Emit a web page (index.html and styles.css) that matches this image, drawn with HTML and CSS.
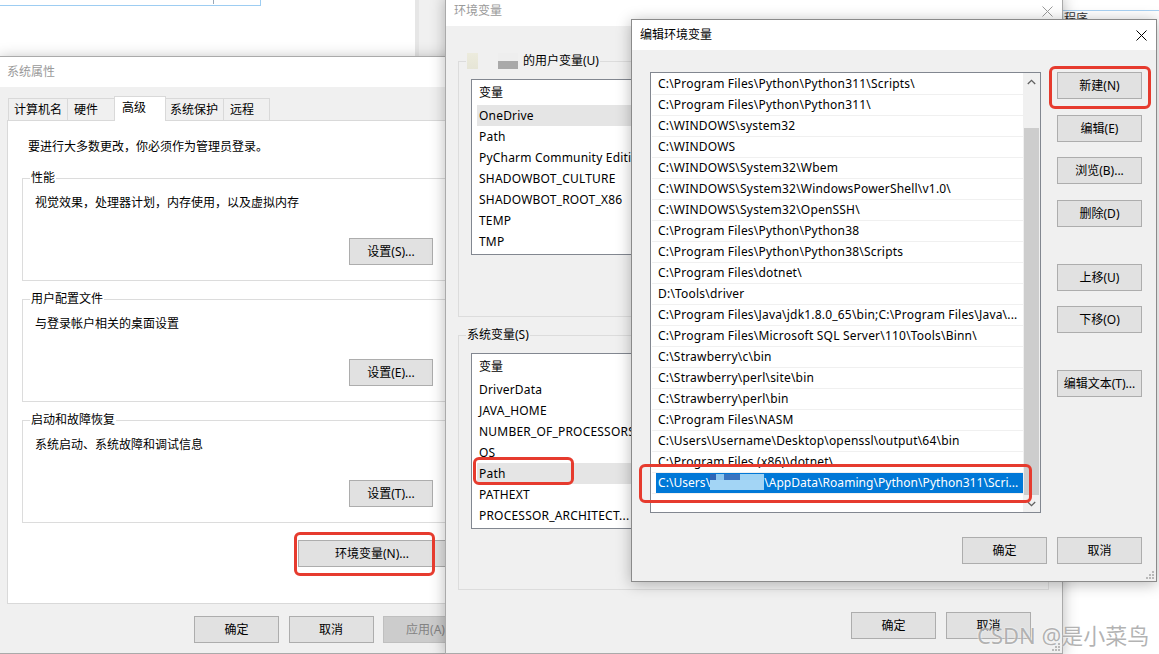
FILE: index.html
```html
<!DOCTYPE html>
<html lang="zh-CN">
<head>
<meta charset="utf-8">
<title>编辑环境变量</title>
<link rel="stylesheet" href="styles.css">
</head>
<body>
<div class="desktop">

  <div class="bgwin bg-left">
    <div class="bg-input"><span class="bg-tick"></span></div>
    <div class="bg-fill"></div>
    <div class="bg-strip"></div>
  </div>
  <div class="bgwin bg-right">
    <div class="bg-line"></div>
    <div class="bg-text">应用程序</div>
  </div>

  <section class="win win-sys">
    <header class="titlebar"><span class="title inactive">系统属性</span></header>
    <div class="sys-body">
      <div class="tabs">
        <span class="tab t1">计算机名</span>
        <span class="tab t2">硬件</span>
        <span class="tab t3 sel">高级</span>
        <span class="tab t4">系统保护</span>
        <span class="tab t5">远程</span>
      </div>
      <div class="panel">
        <p class="notice">要进行大多数更改，你必须作为管理员登录。</p>
        <fieldset class="group first">
          <legend>性能</legend>
          <p class="desc">视觉效果，处理器计划，内存使用，以及虚拟内存</p>
          <div class="btnrow"><button class="btn btn-set">设置(S)...</button></div>
        </fieldset>
        <fieldset class="group">
          <legend>用户配置文件</legend>
          <p class="desc">与登录帐户相关的桌面设置</p>
          <div class="btnrow"><button class="btn btn-set">设置(E)...</button></div>
        </fieldset>
        <fieldset class="group">
          <legend>启动和故障恢复</legend>
          <p class="desc">系统启动、系统故障和调试信息</p>
          <div class="btnrow"><button class="btn btn-set">设置(T)...</button></div>
        </fieldset>
        <div class="envrow"><button class="btn btn-env">环境变量(N)...</button></div>
      </div>
      <div class="sys-footer">
        <button class="btn">确定</button>
        <button class="btn">取消</button>
        <button class="btn disabled">应用(A)</button>
      </div>
    </div>
  </section>

  <section class="win win-env">
    <header class="titlebar">
      <span class="title inactive">环境变量</span>
      <span class="close"><svg width="11" height="11" viewBox="0 0 11 11"><path d="M0.5 0.5L10.5 10.5M10.5 0.5L0.5 10.5" stroke="#9a9a9a" stroke-width="1" fill="none"/></svg></span>
    </header>
    <div class="env-body">
      <fieldset class="env-group">
        <legend><span class="blur"></span>的用户变量(U)</legend>
        <div class="lv">
          <div class="lv-head">变量</div>
          <div class="lv-row sel">OneDrive</div>
          <div class="lv-row">Path</div>
          <div class="lv-row">PyCharm Community Editi...</div>
          <div class="lv-row">SHADOWBOT_CULTURE</div>
          <div class="lv-row">SHADOWBOT_ROOT_X86</div>
          <div class="lv-row">TEMP</div>
          <div class="lv-row">TMP</div>
        </div>
      </fieldset>
      <fieldset class="env-group second">
        <legend>系统变量(S)</legend>
        <div class="lv">
          <div class="lv-head">变量</div>
          <div class="lv-row">DriverData</div>
          <div class="lv-row">JAVA_HOME</div>
          <div class="lv-row">NUMBER_OF_PROCESSORS</div>
          <div class="lv-row">OS</div>
          <div class="lv-row sel">Path</div>
          <div class="lv-row">PATHEXT</div>
          <div class="lv-row">PROCESSOR_ARCHITECT...</div>
        </div>
      </fieldset>
      <div class="env-footer">
        <button class="btn">确定</button>
        <button class="btn">取消</button>
      </div>
    </div>
    <span class="grip"><svg width="10" height="10" viewBox="0 0 10 10"><g fill="#b9b9b9"><rect x="7" y="1" width="2" height="2"/><rect x="4" y="4" width="2" height="2"/><rect x="7" y="4" width="2" height="2"/><rect x="1" y="7" width="2" height="2"/><rect x="4" y="7" width="2" height="2"/><rect x="7" y="7" width="2" height="2"/></g></svg></span>
  </section>

  <section class="win win-edit">
    <header class="titlebar">
      <span class="title">编辑环境变量</span>
      <span class="close"><svg width="11" height="11" viewBox="0 0 11 11"><path d="M0.5 0.5L10.5 10.5M10.5 0.5L0.5 10.5" stroke="#000" stroke-width="1" fill="none"/></svg></span>
    </header>
    <div class="edit-body">
      <div class="elist">
        <div class="el-rows">
          <div class="el-row"><span>C:\Program Files\Python\Python311\Scripts\</span></div>
          <div class="el-row"><span>C:\Program Files\Python\Python311\</span></div>
          <div class="el-row"><span>C:\WINDOWS\system32</span></div>
          <div class="el-row"><span>C:\WINDOWS</span></div>
          <div class="el-row"><span>C:\WINDOWS\System32\Wbem</span></div>
          <div class="el-row"><span>C:\WINDOWS\System32\WindowsPowerShell\v1.0\</span></div>
          <div class="el-row"><span>C:\WINDOWS\System32\OpenSSH\</span></div>
          <div class="el-row"><span>C:\Program Files\Python\Python38</span></div>
          <div class="el-row"><span>C:\Program Files\Python\Python38\Scripts</span></div>
          <div class="el-row"><span>C:\Program Files\dotnet\</span></div>
          <div class="el-row"><span>D:\Tools\driver</span></div>
          <div class="el-row"><span>C:\Program Files\Java\jdk1.8.0_65\bin;C:\Program Files\Java\...</span></div>
          <div class="el-row"><span>C:\Program Files\Microsoft SQL Server\110\Tools\Binn\</span></div>
          <div class="el-row"><span>C:\Strawberry\c\bin</span></div>
          <div class="el-row"><span>C:\Strawberry\perl\site\bin</span></div>
          <div class="el-row"><span>C:\Strawberry\perl\bin</span></div>
          <div class="el-row"><span>C:\Program Files\NASM</span></div>
          <div class="el-row"><span>C:\Users\Username\Desktop\openssl\output\64\bin</span></div>
          <div class="el-row"><span>C:\Program Files (x86)\dotnet\</span></div>
          <div class="el-row sel"><span>C:\Users\<i class="ublur"></i>\AppData\Roaming\Python\Python311\Scri...</span></div>
        </div>
        <div class="sb">
          <div class="sb-arrow"><svg width="9" height="6" viewBox="0 0 9 6"><path d="M0.8 5L4.5 1.3L8.2 5" stroke="#606060" stroke-width="1.3" fill="none"/></svg></div>
          <div class="sb-track"><div class="sb-thumb"></div></div>
          <div class="sb-arrow"><svg width="9" height="6" viewBox="0 0 9 6"><path d="M0.8 1L4.5 4.7L8.2 1" stroke="#606060" stroke-width="1.3" fill="none"/></svg></div>
        </div>
      </div>
      <div class="el-side">
        <button class="btn b1">新建(N)</button>
        <button class="btn b2">编辑(E)</button>
        <button class="btn b3">浏览(B)...</button>
        <button class="btn b4">删除(D)</button>
        <button class="btn b5">上移(U)</button>
        <button class="btn b6">下移(O)</button>
        <button class="btn b7">编辑文本(T)...</button>
      </div>
      <div class="edit-footer">
        <button class="btn">确定</button>
        <button class="btn">取消</button>
      </div>
    </div>
    <span class="grip"><svg width="10" height="10" viewBox="0 0 10 10"><g fill="#b9b9b9"><rect x="7" y="1" width="2" height="2"/><rect x="4" y="4" width="2" height="2"/><rect x="7" y="4" width="2" height="2"/><rect x="1" y="7" width="2" height="2"/><rect x="4" y="7" width="2" height="2"/><rect x="7" y="7" width="2" height="2"/></g></svg></span>
  </section>

  <div class="mark m-env"></div>
  <div class="mark m-path"></div>
  <div class="mark m-row"></div>
  <div class="mark m-new"></div>

  <div class="watermark">CSDN @是小菜鸟</div>
</div>
</body>
</html>
```
FILE: styles.css
```css
* { box-sizing: border-box; }
html, body { margin: 0; padding: 0; }
body {
  width: 1159px;
  height: 654px;
  overflow: hidden;
  background: #fff;
  font-family: "Noto Sans", "Noto Sans CJK SC", sans-serif;
  font-size: 12px;
  line-height: 16px;
  color: #000;
}
p { margin: 0; }
button { font: inherit; color: inherit; }

.desktop {
  position: relative;
  width: 1159px;
  height: 654px;
  overflow: hidden;
  background: #fff;
}

/* background windows */
.bgwin { position: absolute; background: #fff; }
.bg-left { left: 0; top: 0; width: 445px; height: 56px; display: flex; align-items: flex-start; }
.bg-input { position: relative; width: 261px; height: 6px; border-right: 1px solid #9dcdf2; border-bottom: 1px solid #9dcdf2; flex: none; }
.bg-tick { position: absolute; left: 213px; top: 0; width: 1px; height: 4px; background: #9aa9b8; }
.bg-fill { flex: 1; }
.bg-strip { width: 30px; height: 56px; background: linear-gradient(to right, #e6e6e6 0 4px, #f0f0f0 4px); flex: none; }
.bg-right { left: 1030px; top: 0; width: 129px; height: 40px; padding-top: 10px; }
.bg-line { height: 1px; background: #a9d2f3; }
.bg-text { padding-left: 10px; line-height: 15px; color: #333; white-space: nowrap; }

/* windows */
.win {
  position: absolute;
  display: flex;
  flex-direction: column;
  background: #f0f0f0;
  border: 1px solid #aaaaaa;
  box-shadow: 0 2px 14px rgba(0, 0, 0, 0.28);
}
.titlebar {
  flex: none;
  height: 30px;
  background: #fff;
  display: flex;
  align-items: center;
  justify-content: space-between;
  padding-left: 8px;
  white-space: nowrap;
}
.title.inactive { color: #9a9a9a; }
.close { width: 30px; height: 30px; display: flex; align-items: center; justify-content: center; }
.close svg { display: block; }

.btn {
  width: 85px;
  height: 27px;
  padding: 0;
  border: 1px solid #adadad;
  background: #e1e1e1;
  line-height: 25px;
  text-align: center;
  white-space: nowrap;
  flex: none;
}
.btn.disabled { background: #cccccc; border-color: #bfbfbf; color: #838383; }

.grip { position: absolute; right: 1px; bottom: 1px; width: 10px; height: 10px; }
.grip svg { display: block; }

/* System properties */
.win-sys { left: -1px; top: 56px; width: 464px; height: 598px; z-index: 1; }
.win-sys .titlebar { padding-left: 7px; }
.sys-body { padding: 9px 0 10px 7px; }
.tabs { display: flex; align-items: flex-end; height: 24px; padding-left: 1px; position: relative; z-index: 2; }
.tab {
  height: 22px;
  border: 1px solid #d9d9d9;
  border-bottom: 0;
  background: #f0f0f0;
  margin-right: -1px;
  line-height: 21px;
  white-space: nowrap;
}
.tab.sel { height: 25px; background: #fff; margin-bottom: -1px; position: relative; z-index: 3; }
.t1 { width: 60px; padding-left: 5px; }
.t2 { width: 48px; padding-left: 6px; }
.t3 { width: 52px; padding-left: 7px; }
.t4 { width: 59px; padding-left: 4px; }
.t5 { width: 47px; padding-left: 6px; }

.panel { width: 448px; background: #fff; border: 1px solid #d9d9d9; padding-bottom: 36px; position: relative; z-index: 1; }
.notice { margin: 18px 0 0 20px; white-space: nowrap; }
.group { margin: 10px 7px 0 14px; padding: 0 0 15px 0; border: 1px solid #dcdcdc; min-width: 0; }
.group.first { margin-top: 15px; }
legend { margin-left: 7px; padding: 0 1px; line-height: 16px; white-space: nowrap; }
.desc { margin: 9px 0 0 12px; white-space: nowrap; }
.btnrow { display: flex; justify-content: flex-end; margin-top: 27px; padding-right: 13px; }
.btn-set { width: 84px; }
.envrow { display: flex; justify-content: flex-end; margin-top: 17px; padding-right: 8px; }
.btn-env { width: 148px; }
.sys-footer { display: flex; gap: 9.5px; margin-top: 12px; padding-left: 187px; }

/* Environment variables */
.win-env { left: 445px; top: -5px; width: 618px; height: 659px; z-index: 2; }
.win-env .titlebar { padding-left: 8px; }
.env-body { padding: 27px 13px 0 12px; }
.env-group { margin: 0; padding: 0 0 61px 0; border: 1px solid #dcdcdc; min-width: 0; }
.env-group.second { margin-top: 10px; padding-bottom: 60px; }
.blur {
  display: inline-block;
  width: 56px;
  height: 16px;
  vertical-align: top;
  background:
    linear-gradient(#ecebdd, #e6e5d6) 0 0 / 11px 16px no-repeat,
    linear-gradient(#eeeeee 0 50%, #a9a9a9 50% 100%) 31px 0 / 20px 16px no-repeat;
}
.lv { margin: 10px 12px 0 12px; height: 176px; border: 1px solid #828790; background: #fff; overflow: hidden; }
.lv-head { height: 25px; line-height: 25px; padding-left: 7px; }
.lv-row { height: 21px; line-height: 21px; margin-left: 5px; padding-left: 2px; white-space: nowrap; overflow: hidden; letter-spacing: 0.2px; }
.lv-row.sel { background: #e5e5e5; }
.env-footer { display: flex; justify-content: flex-end; gap: 10px; margin-top: 22px; padding-right: 18px; }

/* Edit environment variable */
.win-edit { left: 631px; top: 19px; width: 526px; height: 563px; z-index: 3; border-color: #8a8a8a; }
.edit-body {
  display: grid;
  grid-template-columns: 391px 85px;
  column-gap: 16px;
  padding: 22px 14px 17px 18px;
}
.elist { height: 441px; border: 1px solid #828790; background: #fff; display: flex; }
.el-rows { flex: 1; min-width: 0; padding-top: 1px; overflow: hidden; }
.el-row { height: 21px; margin-left: 1px; border-bottom: 1px solid #f0f0f0; display: flex; }
.el-row span {
  flex: 1;
  min-width: 0;
  margin-left: 4px;
  padding-left: 2px;
  line-height: 20px;
  letter-spacing: 0.2px;
  white-space: nowrap;
  overflow: hidden;
  text-overflow: ellipsis;
}
.el-row.sel span { background: #0078d7; color: #fff; letter-spacing: 0.05px; }
.ublur {
  display: inline-block;
  width: 54px;
  height: 16px;
  vertical-align: -3px;
  background:
    linear-gradient(90deg, #2f64b5 0 6px, #8fc6ee 6px 14px, #3a74c0 14px 30px, #9dd2f4 30px) 0 0 / 54px 6px no-repeat,
    #a3d5f5;
}
.sb { width: 17px; display: flex; flex-direction: column; background: #f0f0f0; flex: none; }
.sb-arrow { height: 17px; display: flex; align-items: center; justify-content: center; flex: none; }
.sb-arrow svg { display: block; }
.sb-track { flex: 1; display: flex; flex-direction: column; padding-top: 38px; }
.sb-thumb { flex: 1; margin: 0 1px; background: #cdcdcd; }
.el-side { display: flex; flex-direction: column; }
.b1 { margin-top: 0; }
.b2 { margin-top: 16px; }
.b3 { margin-top: 15px; }
.b4 { margin-top: 16px; }
.b5 { margin-top: 37px; }
.b6 { margin-top: 15px; }
.b7 { margin-top: 37px; }
.edit-footer { grid-column: 1 / -1; display: flex; justify-content: flex-end; gap: 10px; margin-top: 24px; }

/* annotations */
.mark { position: absolute; border: 3px solid #e63b2e; border-radius: 6px; z-index: 10; }
.m-env { left: 294px; top: 532px; width: 141px; height: 44px; }
.m-path { left: 473px; top: 457px; width: 101px; height: 28px; }
.m-row { left: 639px; top: 464px; width: 393px; height: 39px; }
.m-new { left: 1049px; top: 66px; width: 102px; height: 43px; }

.watermark {
  position: absolute;
  left: 977px;
  top: 621px;
  z-index: 11;
  font-size: 22px;
  line-height: 28px;
  color: rgba(150, 150, 150, 0.72);
  text-shadow: 0 0 2px #fff;
  white-space: nowrap;
}
```
